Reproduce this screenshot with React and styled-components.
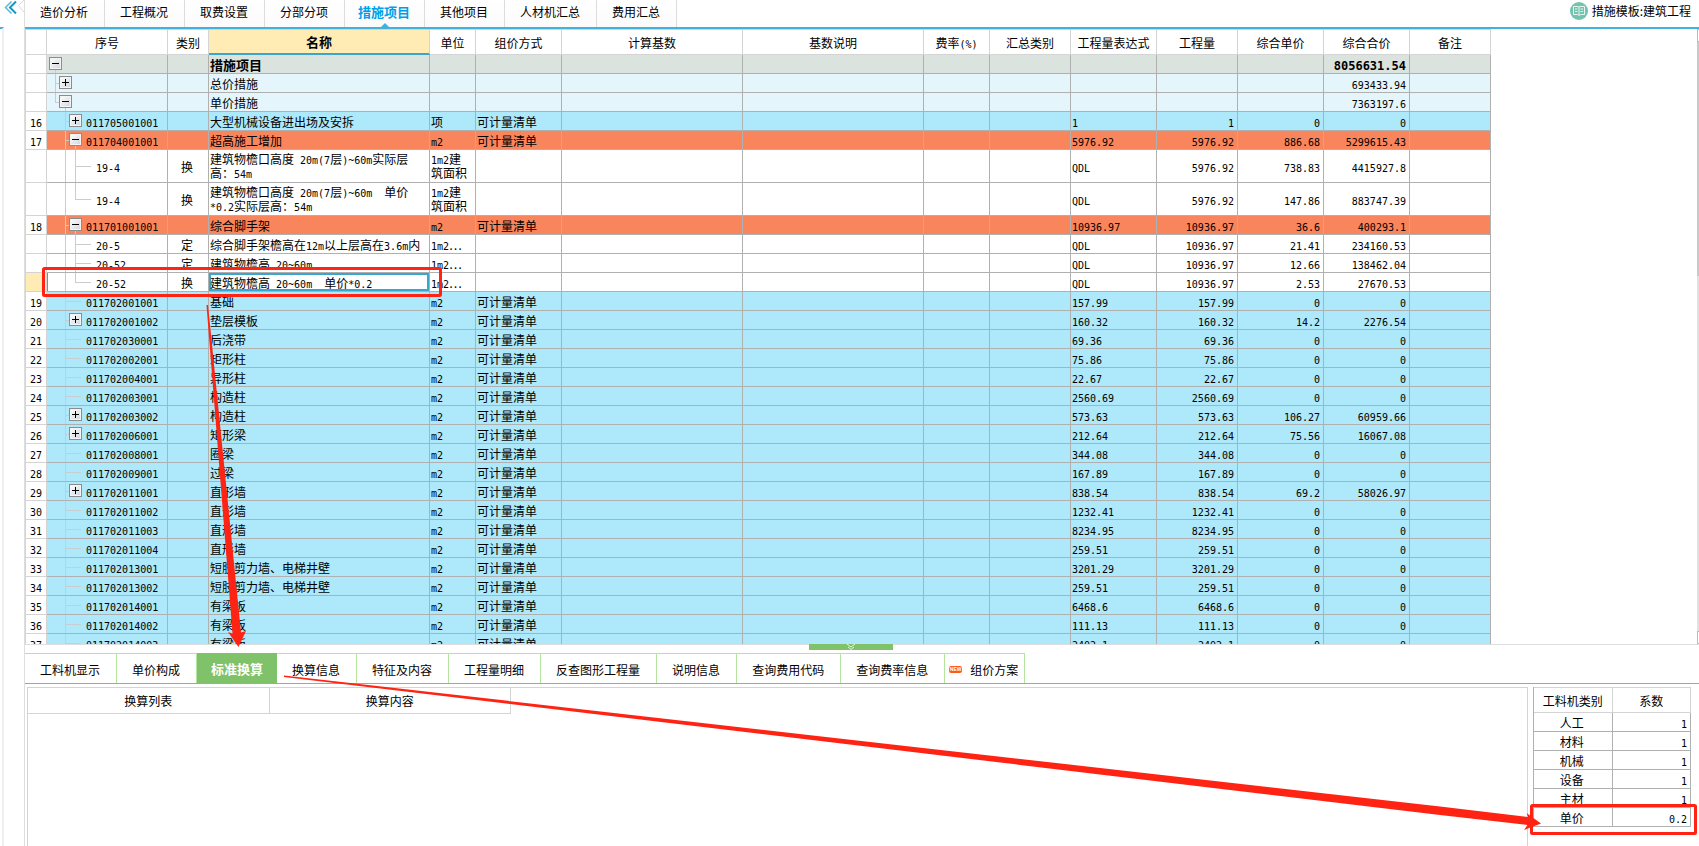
import React from "react";
import styled, { createGlobalStyle, css } from "styled-components";

const GlobalStyle = createGlobalStyle`
  * { box-sizing: border-box; }
  body {
    margin: 0;
    background: #fff;
    color: #000;
    font: 12px/14px "Noto Sans CJK SC", sans-serif;
    overflow: hidden;
  }
  button, th {
    font: inherit;
    color: inherit;
  }
`;

const accent = "#41b1dd";
const selection = "#3aa5cf";
const line = "#b0b0b0";
const softLine = "#d4d4d4";
const treeLine = "#c9cdcf";
const green = "#80c269";
const softGreen = "#b5e49f";
const red = "#ff2313";

/* ---------- page frame ---------- */

const Page = styled.div`
  position: relative;
  display: flex;
  height: 100vh;
  overflow: hidden;
`;

const Rail = styled.aside`
  flex: 0 0 24px;
  display: flex;
  flex-direction: column;
`;

const RailTop = styled.div`
  height: 27px;
`;

const CollapseButton = styled.button`
  display: block;
  width: 24px;
  height: 14px;
  padding: 0;
  border: 0;
  background: none;
  svg {
    display: block;
  }
`;

const RailEdge = styled.div`
  flex: 1;
  width: 4px;
  border-top: 2px solid ${accent};
  border-right: 2px solid #efefef;
`;

const Main = styled.main`
  flex: 1;
  min-width: 0;
  display: grid;
  grid-template-rows: auto minmax(0, 1fr) auto auto auto;
  border-left: 1px solid #dedede;
`;

/* ---------- top tabs ---------- */

const TopBar = styled.header`
  display: flex;
  justify-content: space-between;
  height: 29px;
  border-bottom: 2px solid ${accent};
`;

const TabList = styled.nav`
  display: flex;
`;

const TopTab = styled.button`
  position: relative;
  padding: 0 16px 4px 15px;
  border: 0;
  border-right: 1px solid #dcdcdc;
  background: linear-gradient(#fff, #fbfbfb);
  white-space: nowrap;
  ${(p) =>
    p.$active &&
    css`
      padding: 0 14px 4px 13px;
      color: #00a0e9;
      font-size: 13px;
      font-weight: 700;
      &::after {
        content: "";
        position: absolute;
        left: 50%;
        bottom: 0;
        margin-left: -4px;
        border: 4px solid transparent;
        border-top: 0;
        border-bottom-color: ${accent};
      }
    `}
`;

const TemplateLink = styled.a`
  display: flex;
  align-items: center;
  gap: 4px;
  padding: 0 8px 5px 0;
  color: #000;
  text-decoration: none;
  white-space: nowrap;
`;

/* ---------- tables ---------- */

const Latin = styled.span`
  font-family: "DejaVu Sans Mono", monospace;
  font-size: ${(p) => (p.$bold ? "12px" : "10px")};
  line-height: 1;
`;

const GridArea = styled.section`
  display: flex;
  justify-content: space-between;
  min-height: 0;
  overflow: hidden;
  border-left: 1px solid ${softLine};
`;

const Table = styled.table`
  table-layout: fixed;
  border-collapse: separate;
  border-spacing: 0;
`;

const QuotaTable = styled(Table)`
  width: 1465px;
  height: max-content;
`;

const Th = styled.th`
  height: 26px;
  padding: 1px 0 0;
  border: solid ${softLine};
  border-width: 1px 1px 1px 0;
  font-weight: 400;
  white-space: nowrap;
  ${(p) =>
    p.$active &&
    css`
      background: #ffecb5;
      font-size: 13px;
      font-weight: 700;
      border-bottom: 2px solid ${selection};
    `}
`;

const rowColors = {
  root: "#dae3de",
  group: "#e4f6fb",
  item: "#ade8fb",
  mark: "#f9855c",
  quota: "#fff",
};

const Row = styled.tr`
  background: ${(p) => rowColors[p.$kind]};
  font-size: ${(p) => (p.$kind === "root" ? "13px" : "12px")};
  font-weight: ${(p) => (p.$kind === "root" ? 700 : 400)};
`;

const Td = styled.td`
  height: ${(p) => (p.$tall ? 33 : 19)}px;
  padding: ${(p) => (p.$tall ? 0 : 2)}px 3px 0 1px;
  border: solid ${line};
  border-width: 0 1px 1px 0;
  overflow: hidden;
  white-space: ${(p) => (p.$tall ? "normal" : "nowrap")};
  text-align: ${(p) => p.$align || "left"};
  ${(p) => p.$picked && `box-shadow: inset 0 0 0 2px ${selection};`}
`;

const IndexCell = styled(Td)`
  padding: 2px 0 0;
  border-color: ${softLine};
  background: ${(p) => (p.$current ? "#ffecb5" : "#fff")};
`;

const CodeCell = styled(Td)`
  padding: 0;
  ${(p) => p.$current && `box-shadow: inset 1px 0 0 ${selection};`}
`;

const Tree = styled.div`
  display: flex;
  align-items: center;
  height: ${(p) => (p.$tall ? 32 : 18)}px;
  padding-left: 2px;
`;

const Guide = styled.span`
  flex: 0 0 10px;
  align-self: stretch;
  background-repeat: no-repeat;
  background-image: ${(p) =>
    p.$kind === "blank"
      ? "none"
      : `linear-gradient(${treeLine}, ${treeLine}), linear-gradient(${treeLine}, ${treeLine})`};
  background-size: 1px ${(p) => (p.$kind === "end" ? "50%" : "100%")},
    ${(p) => (p.$kind === "pass" ? "0" : "4px")} 1px;
  background-position: 6px 0, 6px 50%;
`;

const Stub = styled.span`
  flex: 0 0 12px;
  height: 1px;
  background: ${treeLine};
`;

const Toggle = styled.button`
  position: relative;
  flex: 0 0 13px;
  height: 13px;
  margin-bottom: 2px;
  padding: 0;
  border: 1px solid #8c8c8c;
  background: linear-gradient(135deg, #fff, #d0d5dc);
  box-shadow: inset 0 0 0 1px #f4f4f4;
  svg {
    display: block;
  }
  ${(p) =>
    p.$open &&
    css`
      &::after {
        content: "";
        position: absolute;
        top: 12px;
        left: 5px;
        width: 1px;
        height: 4px;
        background: ${treeLine};
      }
    `}
`;

const Code = styled.span`
  padding-top: 2px;
  margin-left: ${(p) => (p.$after === "toggle" ? 4 : 5)}px;
`;

const ScrollBar = styled.div`
  flex: 0 0 2px;
  display: flex;
  flex-direction: column;
  background: #e1e1e1;
`;

const ScrollEnd = styled.div`
  height: 13px;
  border: 1px solid #bbb;
  border-right: 0;
  background: #fff;
`;

const ScrollThumb = styled.div`
  height: 38%;
  margin-bottom: auto;
  background: #c8c8c8;
`;

/* ---------- lower pane ---------- */

const Splitter = styled.div`
  display: flex;
  justify-content: center;
  height: 9px;
  padding-right: 22px;
  border-top: 1px solid #dedede;
`;

const SplitHandle = styled.button`
  width: 84px;
  height: 6px;
  margin-top: -1px;
  padding: 0;
  border: 0;
  background: ${green};
  svg {
    display: block;
    margin: 0 auto;
  }
`;

const DetailTabs = styled.nav`
  display: flex;
  height: 31px;
  border-bottom: 1px solid ${green};
`;

const DetailTab = styled.button`
  display: flex;
  align-items: center;
  gap: 8px;
  padding: 2px 16px 0 15px;
  border: solid ${softGreen};
  border-width: 1px 1px 0 0;
  background: #fff;
  white-space: nowrap;
  ${(p) => p.$compact && "padding: 2px 6px 0 4px;"}
  ${(p) =>
    p.$active &&
    css`
      padding: 0 13px 0 14px;
      border-color: ${green};
      background: ${green};
      color: #fff;
      font-size: 13px;
      font-weight: 700;
    `}
`;

const NewBadge = styled.span`
  width: 13px;
  height: 7px;
  border-radius: 2px;
  background: #ff5a1e;
  color: #fff;
  font: 700 5px/7px "Liberation Sans", sans-serif;
  text-align: center;
`;

const DetailBody = styled.section`
  display: flex;
  gap: 5px;
  height: 162px;
  padding: 3px 8px 0 2px;
`;

const ConversionPanel = styled.div`
  flex: 1;
  border: solid ${softLine};
  border-width: 1px 1px 0 1px;
`;

const ConversionTable = styled(Table)`
  width: 483px;
  th {
    border-top: 0;
  }
`;

const FactorTable = styled(Table)`
  width: 158px;
  height: max-content;
  border-left: 1px solid ${line};
`;

const Annotations = styled.svg`
  position: absolute;
  inset: 0;
  width: 100%;
  height: 100%;
  pointer-events: none;
`;

/* ---------- data ---------- */

const topTabs = ["造价分析", "工程概况", "取费设置", "分部分项", "措施项目", "其他项目", "人材机汇总", "费用汇总"];

const columns = [
  ["", 21], ["序号", 121], ["类别", 41], ["名称", 221], ["单位", 46],
  ["组价方式", 86], ["计算基数", 181], ["基数说明", 181], ["费率(%)", 66],
  ["汇总类别", 81], ["工程量表达式", 86], ["工程量", 81], ["综合单价", 86],
  ["综合合价", 86], ["备注", 81],
];

const item = (no, code, name, qty, price = "0", total = "0", toggle) => ({
  kind: "item", no, code, name, unit: "m2", method: "可计量清单",
  expr: qty, qty, price, total, toggle, guides: ["blank", "tee"],
});

const quota = (code, type, name, unit, qty, price, total, extra) => ({
  kind: "quota", code, type, name, unit, expr: "QDL", qty, price, total,
  guides: ["blank", "pass", "tee"], ...extra,
});

const last = { guides: ["blank", "pass", "end"] };

const rows = [
  { kind: "root", name: "措施项目", total: "8056631.54", toggle: "open", guides: [] },
  { kind: "group", name: "总价措施", total: "693433.94", toggle: "closed", guides: ["tee"] },
  { kind: "group", name: "单价措施", total: "7363197.6", toggle: "open", guides: ["end"] },
  { ...item("16", "011705001001", "大型机械设备进出场及安拆", "1", "0", "0", "closed"), unit: "项" },
  { ...item("17", "011704001001", "超高施工增加", "5976.92", "886.68", "5299615.43", "open"), kind: "mark" },
  quota("19-4", "换", "建筑物檐口高度 20m(7层)~60m实际层高：54m", "1m2建筑面积", "5976.92", "738.83", "4415927.8", { tall: true }),
  quota("19-4", "换", "建筑物檐口高度 20m(7层)~60m\u00a0 单价*0.2实际层高：54m", "1m2建筑面积", "5976.92", "147.86", "883747.39", { tall: true, ...last }),
  { ...item("18", "011701001001", "综合脚手架", "10936.97", "36.6", "400293.1", "open"), kind: "mark" },
  quota("20-5", "定", "综合脚手架檐高在12m以上层高在3.6m内", "1m2⋯", "10936.97", "21.41", "234160.53"),
  quota("20-52", "定", "建筑物檐高 20~60m", "1m2⋯", "10936.97", "12.66", "138462.04"),
  quota("20-52", "换", "建筑物檐高 20~60m\u00a0 单价*0.2", "1m2⋯", "10936.97", "2.53", "27670.53", { current: true, ...last }),
  item("19", "011702001001", "基础", "157.99"),
  item("20", "011702001002", "垫层模板", "160.32", "14.2", "2276.54", "closed"),
  item("21", "011702030001", "后浇带", "69.36"),
  item("22", "011702002001", "矩形柱", "75.86"),
  item("23", "011702004001", "异形柱", "22.67"),
  item("24", "011702003001", "构造柱", "2560.69"),
  item("25", "011702003002", "构造柱", "573.63", "106.27", "60959.66", "closed"),
  item("26", "011702006001", "矩形梁", "212.64", "75.56", "16067.08", "closed"),
  item("27", "011702008001", "圈梁", "344.08"),
  item("28", "011702009001", "过梁", "167.89"),
  item("29", "011702011001", "直形墙", "838.54", "69.2", "58026.97", "closed"),
  item("30", "011702011002", "直形墙", "1232.41"),
  item("31", "011702011003", "直形墙", "8234.95"),
  item("32", "011702011004", "直形墙", "259.51"),
  item("33", "011702013001", "短肢剪力墙、电梯井壁", "3201.29"),
  item("34", "011702013002", "短肢剪力墙、电梯井壁", "259.51"),
  item("35", "011702014001", "有梁板", "6468.6"),
  item("36", "011702014002", "有梁板", "111.13"),
  item("37", "011702014003", "有梁板", "2402.1"),
];

const detailTabs = [
  "工料机显示", "单价构成", "标准换算", "换算信息", "特征及内容", "工程量明细",
  "反查图形工程量", "说明信息", "查询费用代码", "查询费率信息", "组价方案",
];

const factors = [
  ["人工", "1"], ["材料", "1"], ["机械", "1"], ["设备", "1"], ["主材", "1"], ["单价", "0.2"],
];

/* ---------- pieces ---------- */

function Text({ children, bold }) {
  if (!children) return null;
  return children
    .split(/([\x20-\x7e\u00a0]+)/)
    .filter(Boolean)
    .map((part, i) =>
      /^[\x20-\x7e\u00a0]/.test(part) ? <Latin key={i} $bold={bold}>{part}</Latin> : part
    );
}

function TreeToggle({ state }) {
  const open = state === "open";
  return (
    <Toggle type="button" $open={open} aria-expanded={open}>
      <svg width="11" height="11" stroke="#000" fill="none">
        <path d={open ? "M2 5.5H9" : "M2 5.5H9M5.5 2V9"} />
      </svg>
    </Toggle>
  );
}

function QuotaRow({ row }) {
  const { kind, tall, current } = row;
  const bold = kind === "root";
  return (
    <Row $kind={kind}>
      <IndexCell $tall={tall} $align="center" $current={current}><Text>{row.no}</Text></IndexCell>
      <CodeCell $tall={tall} $current={current}>
        <Tree $tall={tall}>
          {row.guides.map((g, i) => <Guide key={i} $kind={g} />)}
          {row.toggle ? <TreeToggle state={row.toggle} /> : <Stub />}
          <Code $after={row.toggle ? "toggle" : "stub"}><Text>{row.code}</Text></Code>
        </Tree>
      </CodeCell>
      <Td $align="center">{row.type}</Td>
      <Td $tall={tall} $picked={current}><Text>{row.name}</Text></Td>
      <Td $tall={tall}><Text>{row.unit}</Text></Td>
      <Td>{row.method}</Td>
      <Td />
      <Td />
      <Td />
      <Td />
      <Td><Text>{row.expr}</Text></Td>
      <Td $align="right"><Text>{row.qty}</Text></Td>
      <Td $align="right"><Text>{row.price}</Text></Td>
      <Td $align="right"><Text bold={bold}>{row.total}</Text></Td>
      <Td />
    </Row>
  );
}

export default function App() {
  return (
    <Page>
      <GlobalStyle />
      <Rail>
        <RailTop>
          <CollapseButton type="button" aria-label="收起">
            <svg width="24" height="14" fill="none">
              <path d="M11.5 1.5L5.5 7.5L11.5 13.5" stroke="#5bbad5" strokeWidth="1.5" />
              <path d="M16 1.5L10 7.5L16 13.5" stroke="#1597c5" strokeWidth="2" />
              <path d="M24 0L18.5 5.5L24 12" stroke="#d8d8d8" />
            </svg>
          </CollapseButton>
        </RailTop>
        <RailEdge />
      </Rail>

      <Main>
        <TopBar>
          <TabList>
            {topTabs.map((t) => (
              <TopTab key={t} type="button" $active={t === "措施项目"}>{t}</TopTab>
            ))}
          </TabList>
          <TemplateLink href="#template">
            <svg width="18" height="18" viewBox="0 0 18 18" fill="none">
              <circle cx="9" cy="9" r="9" fill="#74c3ae" />
              <path d="M3.5 4.5H8Q9 4.5 9 5.5Q9 4.5 10 4.5H14.5V12.500H10.500L9 13.500L7.500 12.500H3.500ZM9 5.500V13M5 7H7.500M5 9.500H7.500M10.500 7H13M10.500 9.500H13" stroke="#e8f6f2" />
            </svg>
            <span>措施模板:建筑工程</span>
          </TemplateLink>
        </TopBar>

        <GridArea>
          <QuotaTable>
            <colgroup>
              {columns.map(([name, width]) => <col key={name} width={width} />)}
            </colgroup>
            <thead>
              <tr>
                {columns.map(([name]) => (
                  <Th key={name} $active={name === "名称"}><Text>{name}</Text></Th>
                ))}
              </tr>
            </thead>
            <tbody>
              {rows.map((row, i) => <QuotaRow key={i} row={row} />)}
            </tbody>
          </QuotaTable>
          <ScrollBar>
            <ScrollEnd />
            <ScrollThumb />
            <ScrollEnd />
          </ScrollBar>
        </GridArea>

        <Splitter>
          <SplitHandle type="button" aria-label="收起">
            <svg width="10" height="6" fill="none" stroke="#e6f5df">
              <path d="M1 0L5 3L9 0M2 3L5 5.5L8 3" />
            </svg>
          </SplitHandle>
        </Splitter>

        <DetailTabs>
          {detailTabs.map((t) => (
            <DetailTab key={t} type="button" $active={t === "标准换算"} $compact={t === "组价方案"}>
              {t === "组价方案" && <NewBadge>NEW</NewBadge>}
              {t}
            </DetailTab>
          ))}
        </DetailTabs>

        <DetailBody>
          <ConversionPanel>
            <ConversionTable>
              <thead>
                <tr>
                  <Th>换算列表</Th>
                  <Th>换算内容</Th>
                </tr>
              </thead>
            </ConversionTable>
          </ConversionPanel>
          <FactorTable>
            <thead>
              <tr>
                <Th>工料机类别</Th>
                <Th>系数</Th>
              </tr>
            </thead>
            <tbody>
              {factors.map(([name, value]) => (
                <tr key={name}>
                  <Td $align="center">{name}</Td>
                  <Td $align="right"><Text>{value}</Text></Td>
                </tr>
              ))}
            </tbody>
          </FactorTable>
        </DetailBody>
      </Main>

      <Annotations viewBox="0 0 1699 846" preserveAspectRatio="none">
        <g fill="none" stroke={red} strokeWidth="3">
          <rect x="43.5" y="268.5" width="397" height="27" rx="1" />
          <rect x="1531.5" y="805.5" width="164" height="28" rx="1" />
        </g>
        <g fill={red}>
          <path d="M206.5 305L208 305L241 632.5L246 631L238.5 647L228 632L232.5 633.5Z" />
          <path d="M284 675.5L1440 806.5L1528 817L1526.5 813L1541 823.5L1524 830L1527.5 825L1440 815L284 677Z" />
        </g>
      </Annotations>
    </Page>
  );
}
